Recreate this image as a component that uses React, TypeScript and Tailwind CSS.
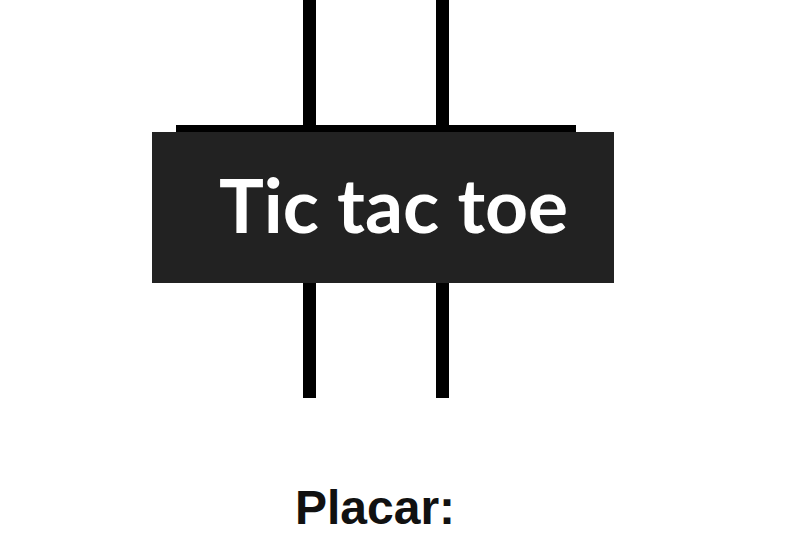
export default function App() {
  return (
    <div className="relative w-[800px] h-[533px] bg-white overflow-hidden">
      <div className="flex h-[398px] pl-[303px] gap-[120px]">
        <div className="w-[13px] h-full bg-black" />
        <div className="w-[13px] h-full bg-black" />
      </div>
      <div className="absolute left-[176px] top-[125px] w-[400px] h-[7px] bg-black" />
      <div className="absolute left-[152px] top-[132px] w-[462px] h-[151px] bg-[#222222] flex items-center pl-[67px]">
        <span
          className="text-white font-bold text-[75px] leading-none pb-[6px]"
          style={{ fontFamily: "Lato, 'Open Sans', sans-serif" }}
        >
          Tic tac toe
        </span>
      </div>
      <div
        className="mt-[86px] pl-[295px] text-[48px] leading-none font-bold text-[#111111]"
        style={{ fontFamily: "'Liberation Sans', Arial, sans-serif" }}
      >
        Placar:
      </div>
    </div>
  );
}
